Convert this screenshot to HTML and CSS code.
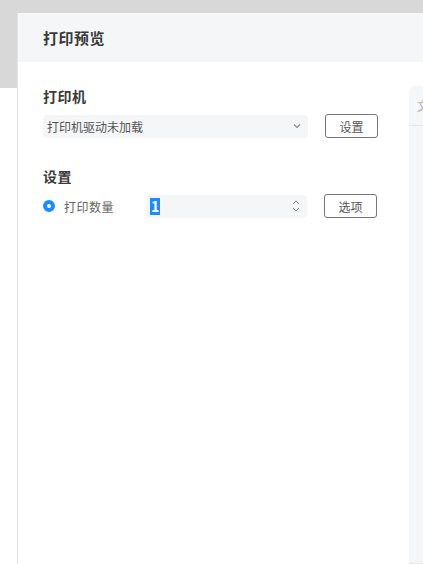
FILE: index.html
```html
<!DOCTYPE html>
<html lang="zh">
<head>
<meta charset="utf-8">
<link rel="stylesheet" href="styles.css">
</head>
<body>
<div class="topbar"></div>
<div class="dialog">
  <div class="dialog-header">打印预览</div>
  <div class="dialog-body">
    <div class="settings">
      <div class="section-title">打印机</div>
      <div class="row">
        <div class="select">
          <span class="select-text">打印机驱动未加载</span>
          <svg class="chev" width="8" height="6" viewBox="0 0 8 6"><path d="M1 1.5 L4 4.5 L7 1.5" fill="none" stroke="#888" stroke-width="1.1"/></svg>
        </div>
        <button class="btn">设置</button>
      </div>
      <div class="section-title second">设置</div>
      <div class="row">
        <span class="radio"></span>
        <span class="radio-label">打印数量</span>
        <div class="number">
          <span class="sel">1</span>
          <svg class="spin" width="8" height="14" viewBox="0 0 8 14"><path d="M1 5 L4 2 L7 5" fill="none" stroke="#888" stroke-width="1"/><path d="M1 9 L4 12 L7 9" fill="none" stroke="#888" stroke-width="1"/></svg>
        </div>
        <button class="btn">选项</button>
      </div>
    </div>
    <div class="preview">
      <div class="preview-head">文档</div>
    </div>
  </div>
</div>
</body>
</html>
```

FILE: styles.css
```css
html, body {
  margin: 0;
  padding: 0;
  height: 100%;
  overflow: hidden;
  background: #ffffff;
  font-family: "Noto Sans CJK SC", "Noto Sans", sans-serif;
}
.topbar {
  height: 88px;
  background: #d8d8d8;
}
.dialog {
  position: absolute;
  left: 17px;
  top: 13px;
  width: 460px;
  height: 560px;
  background: #ffffff;
  border-left: 1px solid #e2e3e5;
  display: flex;
  flex-direction: column;
}
.dialog-header {
  height: 49px;
  background: #f5f6f8;
  padding-left: 25px;
  display: flex;
  align-items: center;
  font-size: 15px;
  font-weight: 700;
  color: #3a3a3a;
  letter-spacing: 0.5px;
}
.dialog-body {
  display: flex;
  flex: 1;
  padding-left: 25px;
}
.settings {
  width: 335px;
  padding-top: 24px;
}
.section-title {
  font-size: 14px;
  font-weight: 700;
  color: #3a3a3a;
  line-height: 20px;
  letter-spacing: 0.5px;
}
.section-title.second {
  margin-top: 28px;
}
.row {
  display: flex;
  align-items: center;
  margin-top: 8px;
  height: 24px;
}
.select {
  width: 265px;
  height: 23px;
  box-sizing: border-box;
  background: #f5f6f8;
  border-radius: 4px;
  display: flex;
  align-items: center;
  padding: 0 7px 0 4px;
  justify-content: space-between;
}
.select-text {
  font-size: 12px;
  color: #555;
}
.btn {
  margin-left: 17px;
  width: 53px;
  height: 24px;
  box-sizing: border-box;
  border: 1px solid #777;
  border-radius: 3px;
  background: #fff;
  font-family: "Noto Sans CJK SC", sans-serif;
  font-size: 12px;
  color: #555;
  padding: 0;
}
.radio {
  width: 12px;
  height: 12px;
  box-sizing: border-box;
  border-radius: 50%;
  border: 4px solid #1a8cff;
  background: #fff;
}
.radio-label {
  margin-left: 9px;
  font-size: 12px;
  color: #666;
  width: 82px;
  letter-spacing: 0.5px;
}
.number {
  width: 161px;
  height: 23px;
  box-sizing: border-box;
  background: #f5f6f8;
  border-radius: 4px;
  display: flex;
  align-items: center;
  justify-content: space-between;
  padding: 0 7px 0 4px;
}
.sel {
  background: #1a8cff;
  color: #fff;
  font-size: 14px;
  font-weight: 700;
  line-height: 17px;
  padding: 0 1px;
}
.preview {
  margin-left: 31px;
  margin-top: 24px;
  width: 80px;
  height: 477px;
  background: #f5f6f8;
  border-top-left-radius: 6px;
  border-bottom: 1px solid #e6e6e6;
}
.preview-head {
  height: 39px;
  border-bottom: 1px solid #e6e7e9;
  padding-left: 8px;
  font-size: 12px;
  line-height: 40px;
  color: #aaa;
}
```
